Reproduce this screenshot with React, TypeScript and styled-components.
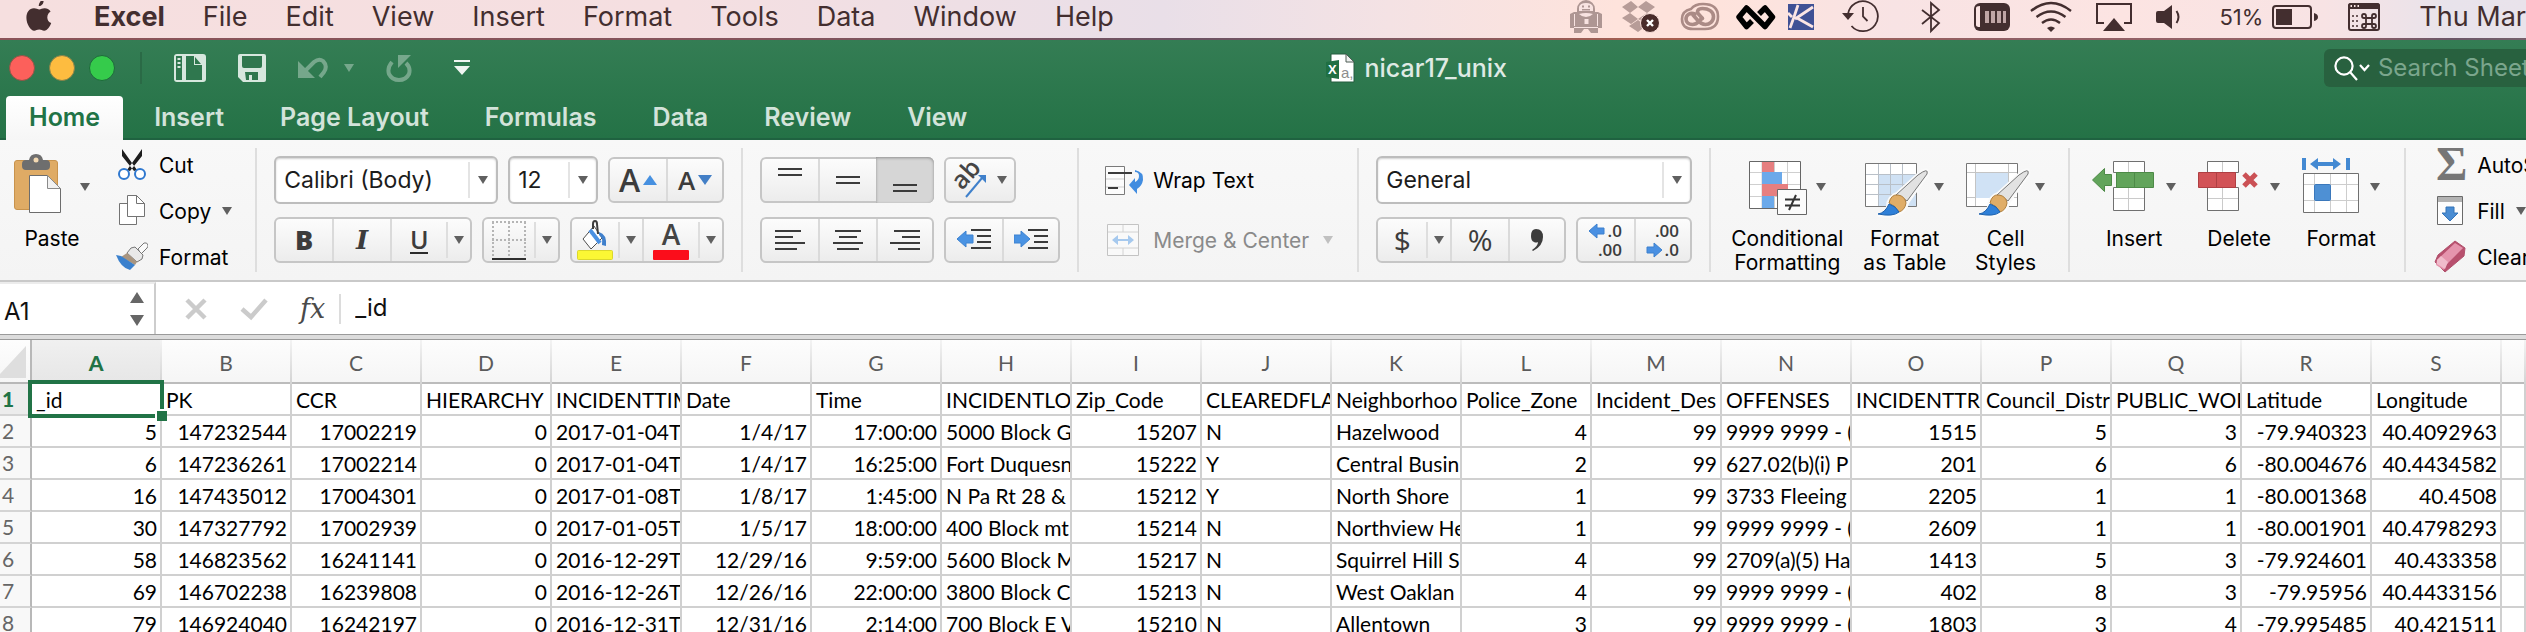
import React from 'react';
import styled, { createGlobalStyle, css } from 'styled-components';

const UI = `Inter, Roboto, "Liberation Sans", sans-serif`;
const SHEET = `Lato, "Open Sans", "Liberation Sans", sans-serif`;

const GlobalStyle = createGlobalStyle`
  *, *::before, *::after { box-sizing: border-box; }
  html, body { margin: 0; background: #fff; }
  body { font-family: ${UI}; overflow: hidden; }
  button, input, select { font: inherit; color: inherit; margin: 0; padding: 0; border: 0; background: none; outline: none; }
  svg { display: block; flex: none; }
`;

const Screen = styled.div`
  display: flex;
  flex-direction: column;
  height: 100vh;
  overflow: hidden;
`;

/* ---------- system menu bar ---------- */

const MenuBar = styled.header`
  flex: none;
  display: flex;
  align-items: center;
  justify-content: space-between;
  height: 38px;
  padding: 0 0 5px 26px;
  color: #432e2f;
  font-size: 27px;
  white-space: nowrap;
  background: linear-gradient(90deg, #f6dfdf 0%, #f5dfe1 27%, #e9dfe8 46%, #f4e2e4 55%, #fee3dc 64%, #fee3dc 68%, #f8e3e4 75%, #fce4e2 84%, #f8e3e4 92%, #e8e3eb 97%, #e9e3eb 100%);
`;

const MenuBarEdge = styled.div`
  flex: none;
  height: 2px;
  background: linear-gradient(90deg, #8b5358 0%, #84545c 30%, #6c5263 47%, #85595f 57%, #a8604f 66%, #8f6066 80%, #966266 92%, #6b5768 97%, #75606c 100%);
`;

const MenuNav = styled.nav`
  display: flex;
  align-items: center;
`;

const MenuItem = styled.button<{ $strong?: boolean }>`
  padding: 0 19px;
  line-height: 32px;
  font-weight: ${(p) => (p.$strong ? 700 : 400)};
`;

const AppleMark = styled.span`
  margin-right: 23px;
`;

const StatusArea = styled.div`
  display: flex;
  align-items: center;
  gap: 12px;
`;

const Battery = styled.div`
  display: flex;
  align-items: center;
  gap: 9px;
  padding-left: 9px;
  font-size: 22px;
`;

const Clock = styled.time`
  padding-left: 13px;
`;

/* ---------- title bar and tabs ---------- */

const WindowHead = styled.div`
  flex: none;
  background: linear-gradient(#347d54, #247246);
  border-bottom: 2px solid #1f6240;
`;

const TitleRow = styled.div`
  display: grid;
  grid-template-columns: minmax(0, 13fr) minmax(0, 10fr) minmax(0, 2fr);
  align-items: center;
  height: 56px;
  white-space: nowrap;
`;

const QuickTools = styled.div`
  display: flex;
  align-items: center;
  padding-left: 9px;
`;

const Lights = styled.div`
  display: flex;
  gap: 14px;
  padding: 3px 25px 3px 0;
  border-right: 2px solid #2a6a46;
  margin-right: 32px;
`;

const Light = styled.button<{ $fill: string; $edge: string }>`
  width: 26px;
  height: 26px;
  border: 1px solid ${(p) => p.$edge};
  border-radius: 50%;
  background: ${(p) => p.$fill};
`;

const ToolButtons = styled.div`
  display: flex;
  align-items: center;
  gap: 32px;
`;

const ToolButton = styled.button<{ $dim?: boolean }>`
  display: flex;
  align-items: center;
  gap: 16px;
  color: #d7e7de;
  opacity: ${(p) => (p.$dim ? 0.42 : 1)};

  &:last-child { margin-left: 10px; }
`;

const DocTitle = styled.h1`
  display: flex;
  align-items: center;
  gap: 10px;
  margin: 0;
  padding: 0 0 0 12px;
  color: #dfeae4;
  font-size: 25px;
  font-weight: 500;
  line-height: 30px;
`;

const SearchBox = styled.label`
  display: flex;
  align-items: center;
  gap: 8px;
  height: 38px;
  padding-left: 10px;
  border-radius: 6px 0 0 6px;
  background: #28613f;
  color: #fff;
  font-size: 24px;
  overflow: hidden;

  input { flex: 1 0 200px; line-height: 30px; }
  input::placeholder { color: #7ba68d; opacity: 1; }
`;

const Tabs = styled.nav`
  display: flex;
  gap: 6px;
  height: 42px;
  padding-left: 6px;
`;

const Tab = styled.button<{ $active?: boolean }>`
  padding: 0 25px;
  font-size: 25px;
  font-weight: 600;
  color: #d3e3da;
  ${(p) =>
    p.$active &&
    css`
      padding: 0 23px 2px;
      margin-bottom: -2px;
      border-radius: 4px 4px 0 0;
      color: #217346;
      background: linear-gradient(#fff, #f6f6f6);
    `}
`;

/* ---------- ribbon ---------- */

const Ribbon = styled.section`
  flex: none;
  display: flex;
  height: 142px;
  padding: 8px 0;
  border-bottom: 2px solid #c9c9c9;
  background: linear-gradient(#f8f8f8, #f4f4f4);
  color: #000;
  font-size: 21px;
  overflow: hidden;
`;

const Group = styled.div<{ $pad?: string; $gap?: number }>`
  flex: none;
  display: flex;
  gap: ${(p) => p.$gap ?? 0}px;
  padding: ${(p) => p.$pad ?? '0 17px'};
  border-right: 2px solid #dedede;
`;

const TwoRows = styled.div`
  display: grid;
  grid-template-rows: 48px 46px;
  gap: 13px;
  padding-top: 8px;
`;

const Row = styled.div`
  display: flex;
  align-items: center;
  gap: 10px;
`;

const ThreeRows = styled.div`
  display: grid;
  grid-auto-rows: 34px;
  gap: 12px;
`;

const Command = styled.button<{ $gap?: number }>`
  display: flex;
  align-items: center;
  gap: ${(p) => p.$gap ?? 11}px;
  white-space: nowrap;

  &:disabled { color: #8a8a8a; }
`;

const MutedCaret = styled.span`
  padding-left: 6px;
`;

const BigCommand = styled.button`
  display: flex;
  flex-direction: column;
  align-items: center;
  padding-top: 4px;
  line-height: 24px;
  white-space: pre-line;
`;

const BigIcon = styled.span`
  display: flex;
  align-items: center;
  height: 70px;
  margin-bottom: 5px;
`;

const ButtonSet = styled.div`
  display: flex;
  height: 46px;
  border: 2px solid #c6c6c6;
  border-radius: 6px;
  background: linear-gradient(#fcfcfc, #ececec);
`;

const SetButton = styled.button<{ $w: number; $line?: 'full' | 'short'; $on?: boolean }>`
  display: flex;
  align-items: center;
  justify-content: center;
  gap: 10px;
  width: ${(p) => p.$w}px;
  color: #3c3c3c;
  ${(p) => p.$line === 'full' && css`border-left: 2px solid #dadada;`}
  ${(p) =>
    p.$line === 'short' &&
    css`
      height: 36px;
      align-self: center;
      border-left: 2px solid #dedede;
    `}
  ${(p) =>
    p.$on &&
    css`
      margin: -2px -2px -2px 0;
      border-radius: 0 6px 6px 0;
      box-shadow: inset 0 1px 3px #8e8e8e;
      background: #d6d6d6;
    `}
`;

const Letter = styled.span<{ $size: number; $kind?: 'bold' | 'italic' | 'underline' | 'light' }>`
  font-family: "Open Sans", sans-serif;
  font-size: ${(p) => p.$size}px;
  font-weight: 600;
  line-height: 30px;
  ${(p) => p.$kind === 'light' && css`font-weight: 400;`}
  ${(p) => p.$kind === 'bold' && css`font-weight: 800;`}
  ${(p) => p.$kind === 'italic' && css`font-family: "DejaVu Serif", serif; font-style: italic; font-weight: 700;`}
  ${(p) => p.$kind === 'underline' && css`border-bottom: 2px solid #2c2c2c; line-height: 26px;`}
`;

const SizeMark = styled.span`
  display: flex;
  align-items: center;
  gap: 3px;
`;

const Combo = styled.label<{ $w: number }>`
  display: flex;
  align-items: center;
  width: ${(p) => p.$w}px;
  height: 48px;
  border: 2px solid #bdbdbd;
  border-radius: 6px;
  background: #fff;
  box-shadow: inset 0 1px 2px #d0d0d0;
  color: #1c1c1c;
  font-size: 23px;

  select {
    flex: 1;
    min-width: 0;
    padding-left: 8px;
    appearance: none;
  }
`;

const ComboArrow = styled.span`
  display: flex;
  align-items: center;
  justify-content: center;
  width: 28px;
  height: 36px;
  border-left: 2px solid #e4e4e4;
`;

/* ---------- formula bar ---------- */

const FormulaBar = styled.div`
  flex: none;
  display: flex;
  align-items: stretch;
  height: 52px;
  background: #fff;
  color: #111;
  font-size: 24px;
`;

const NameBox = styled.div`
  display: flex;
  align-items: center;
  width: 156px;
  padding: 0 10px 0 4px;
  border-top: 2px solid #ececec;
  border-right: 2px solid #cdcdcd;

  input { flex: 1; min-width: 0; padding-top: 4px; }
`;

const FormulaTools = styled.div`
  display: flex;
  align-items: center;
  gap: 32px;
  margin: 12px 0 10px;
  padding: 0 14px 0 28px;
  border-right: 2px solid #dcdcdc;
`;

const FxButton = styled.button`
  color: #4a4a4a;
  font-family: "DejaVu Serif", serif;
  font-size: 27px;
  font-style: italic;
  line-height: 30px;
`;

const FormulaInput = styled.input`
  flex: 1;
  min-width: 0;
  && { padding: 0 0 2px 14px; }
`;

const SplitLine = styled.div`
  flex: none;
  height: 6px;
  border: solid #9a9a9a;
  border-width: 1px 0;
  background: #dcdcdc;
`;

/* ---------- sheet ---------- */

const SheetArea = styled.main`
  flex: 1;
  min-height: 0;
  overflow: hidden;
`;

const Sheet = styled.table`
  width: 100%;
  min-width: 2502px;
  table-layout: fixed;
  border-collapse: separate;
  border-spacing: 0;
  font-family: ${SHEET};
  font-size: 21px;
  line-height: 30px;
  color: #000;

  col.rows { width: 32px; }
  col.data { width: 130px; }
`;

const Corner = styled.td`
  height: 44px;
  padding: 0 4px 4px 0;
  vertical-align: bottom;
  border-right: 2px solid #b8b8b8;
  border-bottom: 2px solid #b8b8b8;
  background: linear-gradient(#fdfdfd, #f6f6f6);

  svg { margin-left: auto; }
`;

const ColHead = styled.th<{ $active?: boolean }>`
  height: 44px;
  padding: 1px 0 0;
  border-right: 2px solid;
  border-image: linear-gradient(#f4f4f4, #d2d2d2) 1;
  color: ${(p) => (p.$active ? '#217346' : '#5b5b5b')};
  font-weight: ${(p) => (p.$active ? 900 : 400)};
  background: ${(p) => (p.$active ? 'linear-gradient(#f0f0f0, #e6e6e6)' : 'linear-gradient(#fdfdfd, #f5f5f5)')};
  box-shadow: inset 0 -2px #bcbcbc;
`;

const RowHead = styled.th<{ $active?: boolean }>`
  height: 32px;
  padding: 0 0 0 2px;
  border-right: 2px solid #b8b8b8;
  border-bottom: 2px solid #d4d4d4;
  text-align: left;
  color: ${(p) => (p.$active ? '#217346' : '#666')};
  font-weight: ${(p) => (p.$active ? 900 : 400)};
  background: ${(p) => (p.$active ? '#ececec' : '#f8f8f8')};
`;

const Cell = styled.td<{ $num?: boolean; $selected?: boolean }>`
  height: 32px;
  padding: 1px 3px 0 4px;
  border-right: 2px solid #d0d0d0;
  border-bottom: 2px solid #d0d0d0;
  line-height: 29px;
  text-align: ${(p) => (p.$num ? 'right' : 'left')};
  white-space: nowrap;
  overflow: ${(p) => (p.$selected ? 'visible' : 'hidden')};
  position: ${(p) => (p.$selected ? 'relative' : 'static')};
  background: #fff;
`;

const Selection = styled.span`
  position: absolute;
  inset: -4px;
  border: 4px solid #217346;

  &::after {
    content: '';
    position: absolute;
    right: -7px;
    bottom: -7px;
    width: 12px;
    height: 12px;
    border: solid #fff;
    border-width: 2px 0 0 2px;
    background: #217346;
  }
`;

/* ---------- drawings ---------- */

const Caret = ({ color = '#606060' }: { color?: string }) => (
  <svg width="10" height="8" viewBox="0 0 10 8"><path d="M0 0h10L5 8z" fill={color} /></svg>
);

const AppleIcon = () => (
  <svg width="26" height="32" viewBox="0 0 26 32" fill="#432e2f">
    <path d="M17.6 0c0 2-1 3.200-2.200 4.200-.9.700-1.800 1-2.700.9 0-2 .9-3.600 2-5.100z" />
    <path d="M21.300 16.500c0-3 1.600-4.700 3.300-5.900-1.500-2.300-3.700-3.200-5.700-3.300-2.400-.2-4 1.200-5.600 1.200-1.500 0-3.300-1.300-5.500-1.200C3.400 7.400.4 11.200.4 16.800c0 6.200 4.200 13 7.800 13 1.800 0 2.900-1.200 5-1.200 2.200 0 3 1.200 5 1.200 3.200 0 6-4.900 7-7.700-2.400-1-3.900-3-3.900-5.600z" />
  </svg>
);

const RobotIcon = () => (
  <svg width="40" height="34" viewBox="0 0 40 34" fill="#ae9693">
    <path d="M11 12V9a9 9 0 0 1 18 0v3h3l4 2v14h-4v5h-7l-3-4h-4l-3 4H8v-5H4V14l4-2z" />
    <path d="M13 11V7q1-4 7-4t7 4v4z" fill="#f8e3e1" />
    <path d="M16 5.500h2v2h-2zm6 0h2v2h-2zM16 9h8v1.500h-8z" fill="#ae9693" />
    <path d="M13 14q7-2 14 0-3 3-7 3t-7-3zM18.500 19h4v5h-4zM8 27h24v1H8zM8 14h1v12H8zm23 0h1v12h-1z" fill="#f8e3e1" />
  </svg>
);

const DropboxIcon = () => (
  <svg width="48" height="34" viewBox="0 0 48 34">
    <path d="M4 7l9-6 7 6-8 6zM20 7l8-6 9 6-8 6zM4 18l8-5 8 6-7 5zM20 19l9-6 8 5-8 6zM11 26l9-6 8 6-8 6z" fill="#b79c98" />
    <circle cx="32" cy="23" r="9.500" fill="#4a2c2a" stroke="#fbe2dd" />
    <path d="M29 20l6 6m0-6l-6 6" stroke="#fff" strokeWidth="2.400" />
  </svg>
);

const CloudIcon = () => (
  <svg width="44" height="32" viewBox="0 0 44 32" fill="none" stroke="#ab8b86" strokeLinecap="round">
    <path d="M15 28q-11 0-11-10 0-8 9-10Q17 3 25 3q15 0 15 12.500 0 12.500-13 12.500z" strokeWidth="2.600" />
    <path d="M17 13c-5-2-9 1-9 5 0 3.500 3 5.500 6.500 5.500 3 0 4.500-1 6.500-3l3-3.500" strokeWidth="3.600" />
    <path d="M24.500 17.500l-4-4.500c-2-2.500-1-5.500 4-5.500 6 0 11 3 11 8 0 5-4 8-8 8-4 0-6-2-8.500-5L15 14" strokeWidth="3.600" />
  </svg>
);

const LoopIcon = () => (
  <svg width="42" height="30" viewBox="0 0 42 30" fill="none" stroke="#000" strokeWidth="5.500" strokeLinejoin="round">
    <path d="M18 19l-5.500 5.500L5 15l7.500-9L31 24.500l7.500-9.500L31 6l-6 6" />
  </svg>
);

const KIcon = () => (
  <svg width="26" height="26" viewBox="0 0 26 26">
    <path d="M0 0h26v26H0z" fill="#3f5195" />
    <path d="M10 1L6 13 2 24M0 9l4 4M25 3L7 15M9 14l16 9" stroke="#fbe5e4" strokeWidth="2.800" fill="none" />
  </svg>
);

const TimeMachineIcon = () => (
  <svg width="64" height="34" viewBox="0 0 64 34" fill="none" stroke="#432e2f" strokeWidth="1.800">
    <path d="M22 14A15 15 0 1 1 25.500 26" />
    <path d="M37 7v9.500l4.500 4.500" />
    <path d="M16 13h12l-6 7z" fill="#432e2f" stroke="none" />
  </svg>
);

const BluetoothIcon = () => (
  <svg width="52" height="34" viewBox="0 0 52 34" fill="none" stroke="#432e2f" strokeWidth="1.800">
    <path d="M20 10l17 13-8 8V3l8 7-17 14" />
  </svg>
);

const MemoryIcon = () => (
  <svg width="50" height="32" viewBox="0 0 50 32">
    <rect x="8" y="2" width="36" height="28" rx="6" fill="#432e2f" />
    <path d="M10 7q0-2 4-2v21q-4 0-4-2z" fill="#fbe5e4" />
    <path d="M19 10h4v12h-4zm6 0h4v12h-4zm6 0h4v12h-4zm6 0h3v12h-3z" fill="#bfa5a5" />
  </svg>
);

const WifiIcon = () => (
  <svg width="46" height="32" viewBox="0 0 46 32" fill="none" stroke="#432e2f" strokeWidth="2.400">
    <path d="M3 10q20-16 40 0M8.500 16q14.500-11 29 0M14 22q9-7 18 0" />
    <path d="M19 27q4-3 8 0l-4 4z" fill="#432e2f" stroke="none" />
  </svg>
);

const AirplayIcon = () => (
  <svg width="52" height="32" viewBox="0 0 52 32">
    <path d="M18 22h-7V3h34v19h-7" fill="none" stroke="#432e2f" strokeWidth="2" />
    <path d="M28 17l11 13H17z" fill="#432e2f" />
  </svg>
);

const VolumeIcon = () => (
  <svg width="48" height="32" viewBox="0 0 48 32">
    <path d="M6 12q0-2 2-2h6l8-6v24l-8-6H8q-2 0-2-2z" fill="#432e2f" />
    <path d="M26.500 10q4 6 0 12" fill="none" stroke="#432e2f" strokeWidth="2" />
  </svg>
);

const BatteryIcon = () => (
  <svg width="52" height="32" viewBox="0 0 52 32">
    <rect x="1" y="5" width="38" height="22" rx="3" fill="none" stroke="#432e2f" strokeWidth="2" />
    <path d="M4 8h16v16H4zM42 12q4 1 4 4t-4 4z" fill="#432e2f" />
  </svg>
);

const CalendarIcon = () => (
  <svg width="58" height="32" viewBox="0 0 58 32" fill="none" stroke="#432e2f">
    <rect x="13" y="3" width="30" height="26" rx="2" strokeWidth="2" />
    <path d="M12 5q0-3 3-3h26q3 0 3 3v3H12z" fill="#432e2f" stroke="none" />
    <path d="M14.500 5h1.500m2 0h1.500m2 0h1.500" stroke="#fbe5e4" strokeWidth="2" />
    <path d="M17 14v12m4-12v12" strokeDasharray="2 3" strokeWidth="1.500" />
    <path d="M30 17h6v6h-6zM30 17h-2a2 2 0 1 1 2-2zM36 17h2a2 2 0 1 0-2-2zM30 23h-2a2 2 0 1 0 2 2zM36 23h2a2 2 0 1 1-2 2z" strokeWidth="1.800" />
  </svg>
);

const SidebarIcon = () => (
  <svg width="32" height="28" viewBox="0 0 32 28">
    <rect width="32" height="28" rx="3" fill="currentColor" />
    <path d="M2 2h6v24H2zM12 2h8v9h8v15H12z" fill="#2f774e" />
    <path d="M3.500 4h3v2h-3zm0 4h3v2h-3zm0 4h3v2h-3z" fill="currentColor" />
    <path d="M21 3l6 7h-6z" fill="#2f774e" />
  </svg>
);

const SaveIcon = () => (
  <svg width="28" height="28" viewBox="0 0 28 28">
    <path d="M2 0h24q2 0 2 2v24q0 2-2 2H5l-5-5V2q0-2 2-2z" fill="currentColor" />
    <path d="M4 2h20v10q0 2-2 2H6q-2 0-2-2zM7 18h13v8h-6v-5h-3v5H8z" fill="#2f774e" />
  </svg>
);

const UndoIcon = () => (
  <svg width="30" height="22" viewBox="0 0 30 22">
    <path d="M0 4v17h17z" fill="currentColor" />
    <path d="M7 14L16 5q5-4 9-1 5 5 1 11l-4 5" fill="none" stroke="currentColor" strokeWidth="4" />
  </svg>
);

const RedoIcon = () => (
  <svg width="26" height="27" viewBox="0 0 26 27">
    <path d="M6 7q-5 6-3 12 3 6 10 6t10-6q2-6-3-11" fill="none" stroke="currentColor" strokeWidth="4" />
    <path d="M12 0h13L12 13z" fill="currentColor" />
  </svg>
);

const CustomizeIcon = () => (
  <svg width="16" height="16" viewBox="0 0 16 16" fill="#f0f6f2"><path d="M0 0h16v2H0zM0 6h16l-8 9z" /></svg>
);

const BookIcon = () => (
  <svg width="29" height="30" viewBox="0 0 29 30">
    <path d="M5 1h15l8 8v20H5z" fill="#fff" stroke="#245c3e" />
    <path d="M20 1v8h8z" fill="#eef0ef" stroke="#4e5d55" strokeLinejoin="round" />
    <path d="M0 9l13-2v19L0 24z" fill="#1f6f43" />
    <text x="2" y="21" fontSize="13" fontWeight="700" fontFamily="Liberation Sans" fill="#fff">X</text>
    <text x="15" y="25" fontSize="15" fontFamily="Liberation Sans" fill="#8d8d8d">a,</text>
  </svg>
);

const SearchIcon = () => (
  <svg width="36" height="28" viewBox="0 0 36 28" fill="none" stroke="#fff" strokeWidth="2.200">
    <circle cx="10" cy="12" r="8.600" />
    <path d="M16 18l7 8M26 11l4.500 5 4.500-5" />
  </svg>
);

const PasteIcon = () => (
  <svg width="66" height="70" viewBox="0 0 66 70">
    <rect x=".5" y="8.500" width="43" height="49" rx="2.500" fill="#dfab65" stroke="#c8934d" />
    <path d="M8 12q0-4 4-4h3q1-6 7-6t7 6h3q4 0 4 4v2q0 4-4 4H12q-4 0-4-4z" fill="#6e6e6e" />
    <circle cx="22" cy="8" r="2.500" fill="#f3d9b2" />
    <path d="M15.500 23.500h18l13 13v24h-31z" fill="#fff" stroke="#6d6d6d" />
    <path d="M33.500 23.500v13h13z" fill="#f1f1f1" stroke="#8a8a8a" strokeLinejoin="round" />
  </svg>
);

const CutIcon = () => (
  <svg width="32" height="34" viewBox="0 0 32 34">
    <path d="M6 1l15 21-3 1L6 8zM26 1L11 22l3 1L26 8z" fill="#1d1d1d" />
    <g fill="#fff" stroke="#2f78cf" strokeWidth="2"><circle cx="8" cy="26" r="5" /><circle cx="24" cy="26" r="5" /></g>
  </svg>
);

const CopyIcon = () => (
  <svg width="32" height="34" viewBox="0 0 32 34" fill="#fff" stroke="#737373">
    <path d="M3.500 9.500h17v21h-17z" />
    <path d="M11.500 1.500h9l8 8v13h-17z" />
    <path d="M20.500 1.500v8h8z" strokeLinejoin="round" />
  </svg>
);

const PainterIcon = () => (
  <svg width="32" height="34" viewBox="0 0 32 34">
    <path d="M22 9l6-6q3-1 4 2 0 2-1 3l-6 6z" fill="#fafafa" stroke="#777" />
    <path d="M15 8l4-1 8 8-1 4-5 3-10-9z" fill="#e9e9e9" stroke="#777" />
    <path d="M11 13l10 9-2 3L5 17z" fill="#a89580" />
    <path d="M5 16l14 9-5 5Q5 28 0 15z" fill="#3a80cd" />
  </svg>
);

const SigmaIcon = () => (
  <svg width="32" height="34" viewBox="0 0 32 34">
    <text x="2" y="32" fontSize="48" fontWeight="700" fontFamily="Liberation Serif" fill="#767676">Σ</text>
  </svg>
);

const FillIcon = () => (
  <svg width="32" height="34" viewBox="0 0 32 34">
    <path d="M3.500 2.500h25v28h-25z" fill="#fdfdfd" stroke="#6a6a6a" />
    <path d="M4 3h24v5H4z" fill="#b3b3b3" />
    <path d="M12 13h8v6h4l-8 8-8-8h4z" fill="#4a8dd3" stroke="#3574b8" />
  </svg>
);

const EraserIcon = () => (
  <svg width="32" height="34" viewBox="0 0 32 34" strokeLinejoin="round">
    <path d="M1 22L4 15 21 1l10 7-1 8-19 16z" fill="#b8506e" stroke="#b0506c" />
    <path d="M3 20L21 3l8 5-17 17-2 5-8-5z" fill="#e594ad" />
    <path d="M3 20l4-4 7 6-3 7-8-5z" fill="#f0bccb" />
  </svg>
);

const FontStep = ({ up }: { up?: boolean }) => (
  <svg width="14" height="10" viewBox="0 0 14 10"><path d={up ? 'M7 0l7 10H0z' : 'M0 0h14L7 10z'} fill={up ? '#4690e0' : '#437fc6'} /></svg>
);

const FontSize = ({ up }: { up?: boolean }) => (
  <SizeMark><Letter $size={up ? 32 : 26}>A</Letter><FontStep up={up} /></SizeMark>
);

const BordersIcon = () => (
  <svg width="36" height="42" viewBox="0 0 36 42" fill="none">
    <path d="M1 3h34M1 21h34M2 3v34M18 3v34M34 3v34" stroke="#b5b5b5" strokeWidth="2" strokeDasharray="2 2" />
    <path d="M1 40h34" stroke="#2d2d2d" strokeWidth="2" />
  </svg>
);

const BucketIcon = () => (
  <svg width="36" height="42" viewBox="0 0 36 42">
    <path d="M6 20l11-13 8 12-11 11z" fill="#fff" stroke="#4e4e4e" />
    <path d="M13 11l10 13" stroke="#4a90e2" strokeWidth="4" />
    <path d="M16 10V5q0-3 2-3t2 3l1 10" fill="none" stroke="#3e3e3e" strokeWidth="2" />
    <path d="M22 13q8 2 7 14l-4-1q1-8-3-10z" fill="#4080cc" />
    <rect x=".5" y="31.500" width="35" height="9" rx="1" fill="#fbf734" stroke="#dbd72d" />
  </svg>
);

const FontColorIcon = () => (
  <svg width="36" height="42" viewBox="0 0 36 42">
    <text x="18" y="26" textAnchor="middle" fontSize="28" fontWeight="600" fontFamily="Open Sans" fill="#444">A</text>
    <rect y="31" width="36" height="10" rx="1" fill="#fb0d1b" />
  </svg>
);

const VerticalIcon = ({ y }: { y: number }) => (
  <svg width="24" height="30" viewBox="0 0 24 30"><path d={`M0 ${y}h24M0 ${y + 6}h24`} stroke="#3b3b3b" strokeWidth="2" /></svg>
);

const AlignIcon = ({ side }: { side: 'left' | 'center' | 'right' }) => {
  const widths = [26, 18, 30, 22];
  return (
    <svg width="30" height="22" viewBox="0 0 30 22">
      {widths.map((w, i) => (
        <rect key={w} x={side === 'left' ? 0 : side === 'center' ? (30 - w) / 2 : 30 - w} y={1 + i * 6} width={w} height="2" fill="#3b3b3b" />
      ))}
    </svg>
  );
};

const OrientationIcon = () => (
  <svg width="34" height="40" viewBox="0 0 34 40">
    <text transform="translate(9 31) rotate(-48)" fontSize="25" fontWeight="600" fontFamily="Open Sans" fill="#454545">ab</text>
    <path d="M13 37l16-19" stroke="#3f80cb" strokeWidth="2" />
    <path d="M25 15h8v8z" fill="#3f80cb" />
  </svg>
);

const IndentIcon = ({ out }: { out?: boolean }) => (
  <svg width="34" height="24" viewBox="0 0 34 24">
    <path d="M14 2h20M20 8h14M20 14h14M14 20h20" stroke="#3b3b3b" strokeWidth="2" />
    <path d={out ? 'M0 11L9 3v4h7v8H9v4z' : 'M16 11L7 3v4H0v8h7v4z'} fill="#4a93e3" stroke="#3c82d0" />
  </svg>
);

const WrapIcon = () => (
  <svg width="40" height="32" viewBox="0 0 40 32">
    <path d="M.5 2.500h19v28H.5z" fill="#fcfcfc" stroke="#7a7a7a" />
    <path d="M1 15h18M1 23h18" stroke="#cfcfcf" />
    <path d="M3 9h24M3 24h10" stroke="#3c3c3c" strokeWidth="2" />
    <path d="M30 6q9 2 8 10-1 6-6 9v5l-8-9 6-7v4q4-2 4-6 0-4-4-4z" fill="#428de0" />
  </svg>
);

const MergeIcon = () => (
  <svg width="40" height="34" viewBox="0 0 40 34">
    <path d="M2.500 1.500h31v31h-31z" fill="#f9f9f9" stroke="#c3c3c3" />
    <path d="M3 9h30M3 25h30M18 2v7M18 25v7" stroke="#d2d2d2" />
    <path d="M7 17l6-5v4h10v-4l6 5-6 5v-4H13v4z" fill="#a6c9ee" />
  </svg>
);

const CommaIcon = () => (
  <svg width="14" height="24" viewBox="0 0 14 24">
    <path d="M6 1q7 0 7 8 0 9-10 14l-1-1q6-4 6-8-2 1-4 0-3-1-3-6 0-7 5-7z" fill="#3c3c3c" />
  </svg>
);

const DecimalIcon = ({ more }: { more?: boolean }) => (
  <svg width="38" height="36" viewBox="0 0 38 36" fontFamily="Open Sans" fontSize="17" fontWeight="600" fill="#3c3c3c">
    <text x="35" y="15" textAnchor="end">{more ? '.0' : '.00'}</text>
    <text x="35" y="34" textAnchor="end">{more ? '.00' : '.0'}</text>
    <path d={more ? 'M2 9l8-7v4h7v6h-7v4z' : 'M18 28l-8-7v4H3v6h7v4z'} fill="#4a90e2" stroke="#3c80ce" />
  </svg>
);

const ConditionalIcon = () => (
  <svg width="67" height="70" viewBox="0 0 67 70">
    <path d="M.5 9.500h51v47H.5z" fill="#fff" />
    <path d="M13 9v47M25.500 9v47M38.500 9v47M1 20.500h50M1 32.500h50M1 44.500h50" stroke="#cfcfcf" />
    <path d="M13 10h12v10H13zM13 32h26v12H13z" fill="#e67f80" />
    <path d="M13 20h20v12H13zM13 44h12v12H13z" fill="#6ba9ea" />
    <path d="M.5 9.500h51v47H.5z" fill="none" stroke="#666" />
    <path d="M28.500 37.500h29v25h-29z" fill="#fbfbfb" stroke="#666" />
    <path d="M36 47.500h15M36 53.500h15M47 43l-7 15" stroke="#333" strokeWidth="2" />
  </svg>
);

const Brush = () => (
  <g>
    <path d="M13 63q7-1 10-8 0-10 9-13L54 22q10-8 8 1L46 45q-4 5-5 9-6 12-28 9z" fill="none" stroke="#fafafa" strokeWidth="4" />
    <path d="M31 43L53 23q11-8 9-1L42 49q-6-5-11-6z" fill="#e2e2e2" stroke="#777" />
    <path d="M24 51q2-9 9-8 7 1 8 8-1 7-7 9-4-7-10-9z" fill="#e0ad67" stroke="#b07f3c" />
    <path d="M13 62q7-1 11-10 7 2 10 8-6 5-21 2z" fill="#2f80d8" stroke="#1f62ad" />
  </g>
);

const TableStyleIcon = () => (
  <svg width="69" height="70" viewBox="0 0 69 70">
    <path d="M.5 11.500h51v43H.5z" fill="#fff" />
    <path d="M13 22h38v32H13z" fill="#cfe1f4" />
    <path d="M13.500 12v42M25.500 12v42M37.500 12v42M1 22.500h50M1 32.500h50M1 42.500h50" stroke="#b9c0c8" />
    <path d="M.5 11.500h51v43H.5z" fill="none" stroke="#777" />
    <Brush />
  </svg>
);

const CellStyleIcon = () => (
  <svg width="69" height="70" viewBox="0 0 69 70">
    <path d="M.5 11.500h51v43H.5z" fill="#fff" />
    <path d="M9.500 12v42M42.500 12v42M1 20.500h50M1 45.500h50" stroke="#c4c4c4" />
    <path d="M10 21h32v25H10z" fill="#d0e2f5" />
    <path d="M.5 11.500h51v43H.5z" fill="none" stroke="#777" />
    <Brush />
  </svg>
);

const InsertIcon = () => (
  <svg width="74" height="70" viewBox="0 0 74 70">
    <path d="M21.500 9.500h31v11h-31zM21.500 35.500h31v23h-31z" fill="#fff" stroke="#707070" />
    <path d="M36.500 10v10M36.500 36v22M22 46.500h30" stroke="#cacaca" />
    <path d="M24.500 20.500h37v15h-37zM.5 28L12.500 16.500v6h7v11h-7v6z" fill="#62a45b" stroke="#4d8a47" strokeLinejoin="round" />
    <path d="M42.500 21v14" stroke="#4d8a47" />
  </svg>
);

const DeleteIcon = () => (
  <svg width="72" height="70" viewBox="0 0 72 70">
    <path d="M9.500 9.500h31v11h-31zM9.500 35.500h31v23h-31z" fill="#fff" stroke="#707070" />
    <path d="M24.500 10v10M24.500 36v22M10 46.500h30" stroke="#cacaca" />
    <path d="M.5 20.500h37v15H.5z" fill="#d25357" stroke="#b03f43" strokeLinejoin="round" />
    <path d="M18.500 21v14" stroke="#b03f43" />
    <path d="M46 22l12 12m0-12L46 34" stroke="#cb5155" strokeWidth="5" />
  </svg>
);

const FormatIcon = () => (
  <svg width="68" height="70" viewBox="0 0 68 70">
    <path d="M1.500 21.500h55v39h-55z" fill="#fff" />
    <path d="M12.500 22v38M28.500 22v38M44.500 22v38M2 32.500h54M2 48.500h54" stroke="#cdcdcd" />
    <path d="M1.500 21.500h55v39h-55z" fill="none" stroke="#707070" />
    <path d="M0 6h4v12H0zM44 6h4v12h-4zM8 12l8-6v4h15V6l8 6-8 6v-4H16v4z" fill="#4389d2" />
    <rect x="12.500" y="32.500" width="16" height="16" rx="1" fill="#4e90d4" stroke="#3b78bb" />
  </svg>
);

const SpinnerIcon = () => (
  <svg width="14" height="34" viewBox="0 0 14 34" fill="#666"><path d="M7 0l7 11H0zM0 23h14L7 34z" /></svg>
);

const CancelIcon = () => (
  <svg width="24" height="24" viewBox="0 0 24 24"><path d="M3 3l18 18M21 3L3 21" stroke="#cbcbcb" strokeWidth="4.500" /></svg>
);

const AcceptIcon = () => (
  <svg width="28" height="24" viewBox="0 0 28 24"><path d="M2 12l9 8L26 3" fill="none" stroke="#cbcbcb" strokeWidth="4.500" /></svg>
);

const CornerIcon = () => (
  <svg width="26" height="32" viewBox="0 0 26 32"><path d="M26 0v32H0v-4z" fill="#dedede" /></svg>
);

/* ---------- data ---------- */

const menus = ['File', 'Edit', 'View', 'Insert', 'Format', 'Tools', 'Data', 'Window', 'Help'];
const tabs = ['Home', 'Insert', 'Page Layout', 'Formulas', 'Data', 'Review', 'View'];
const letters = 'ABCDEFGHIJKLMNOPQRS'.split('');
const textColumns = new Set([4, 7, 9, 10, 13]);

const rows: string[][] = [
  ['_id', 'PK', 'CCR', 'HIERARCHY', 'INCIDENTTIM', 'Date', 'Time', 'INCIDENTLOC', 'Zip_Code', 'CLEAREDFLA', 'Neighborhoo', 'Police_Zone', 'Incident_Des', 'OFFENSES', 'INCIDENTTRA', 'Council_Distr', 'PUBLIC_WOR', 'Latitude', 'Longitude'],
  ['5', '147232544', '17002219', '0', '2017-01-04T', '1/4/17', '17:00:00', '5000 Block G', '15207', 'N', 'Hazelwood', '4', '99', '9999 9999 - (', '1515', '5', '3', '-79.940323', '40.4092963'],
  ['6', '147236261', '17002214', '0', '2017-01-04T', '1/4/17', '16:25:00', 'Fort Duquesn', '15222', 'Y', 'Central Busin', '2', '99', '627.02(b)(i) P', '201', '6', '6', '-80.004676', '40.4434582'],
  ['16', '147435012', '17004301', '0', '2017-01-08T', '1/8/17', '1:45:00', 'N Pa Rt 28 &', '15212', 'Y', 'North Shore', '1', '99', '3733 Fleeing', '2205', '1', '1', '-80.001368', '40.4508'],
  ['30', '147327792', '17002939', '0', '2017-01-05T', '1/5/17', '18:00:00', '400 Block mt', '15214', 'N', 'Northview He', '1', '99', '9999 9999 - (', '2609', '1', '1', '-80.001901', '40.4798293'],
  ['58', '146823562', '16241141', '0', '2016-12-29T', '12/29/16', '9:59:00', '5600 Block M', '15217', 'N', 'Squirrel Hill S', '4', '99', '2709(a)(5) Ha', '1413', '5', '3', '-79.924601', '40.433358'],
  ['69', '146702238', '16239808', '0', '2016-12-26T', '12/26/16', '22:00:00', '3800 Block C', '15213', 'N', 'West Oaklan', '4', '99', '9999 9999 - (', '402', '8', '3', '-79.95956', '40.4433156'],
  ['79', '146924040', '16242197', '0', '2016-12-31T', '12/31/16', '2:14:00', '700 Block E V', '15210', 'N', 'Allentown', '3', '99', '9999 9999 - (', '1803', '3', '4', '-79.995485', '40.421511'],
];

const ComboBox = ({ label, value, width }: { label: string; value: string; width: number }) => (
  <Combo $w={width}>
    <select aria-label={label} defaultValue={value}><option>{value}</option></select>
    <ComboArrow><Caret /></ComboArrow>
  </Combo>
);

const Drop = ({ label, width = 24 }: { label: string; width?: number }) => (
  <SetButton $w={width} $line="short" aria-label={label}><Caret /></SetButton>
);

const Big = ({ icon, label }: { icon: React.ReactNode; label: string }) => (
  <BigCommand>
    <BigIcon>{icon}<Caret /></BigIcon>
    {label}
  </BigCommand>
);

export default function App() {
  return (
    <Screen>
      <GlobalStyle />
      <MenuBar>
        <MenuNav aria-label="Menu bar">
          <AppleMark><AppleIcon /></AppleMark>
          <MenuItem $strong>Excel</MenuItem>
          {menus.map((m) => <MenuItem key={m}>{m}</MenuItem>)}
        </MenuNav>
        <StatusArea>
          <RobotIcon /><DropboxIcon /><CloudIcon /><LoopIcon /><KIcon /><TimeMachineIcon /><BluetoothIcon />
          <MemoryIcon /><WifiIcon /><AirplayIcon /><VolumeIcon />
          <Battery>51%<BatteryIcon /></Battery>
          <CalendarIcon />
          <Clock>Thu Mar</Clock>
        </StatusArea>
      </MenuBar>
      <MenuBarEdge />

      <WindowHead>
        <TitleRow>
          <QuickTools>
            <Lights>
              <Light aria-label="Close" $fill="#fc605b" $edge="#8f5546" />
              <Light aria-label="Minimize" $fill="#fdbc40" $edge="#86814a" />
              <Light aria-label="Zoom" $fill="#35cb4b" $edge="#1e6a3b" />
            </Lights>
            <ToolButtons>
              <ToolButton aria-label="Gallery"><SidebarIcon /></ToolButton>
              <ToolButton aria-label="Save"><SaveIcon /></ToolButton>
              <ToolButton aria-label="Undo" $dim><UndoIcon /><Caret color="#d7e7de" /></ToolButton>
              <ToolButton aria-label="Repeat" $dim><RedoIcon /></ToolButton>
              <ToolButton aria-label="Customize toolbar"><CustomizeIcon /></ToolButton>
            </ToolButtons>
          </QuickTools>
          <DocTitle><BookIcon />nicar17_unix</DocTitle>
          <SearchBox><SearchIcon /><input aria-label="Search Sheet" placeholder="Search Sheet" /></SearchBox>
        </TitleRow>
        <Tabs>
          {tabs.map((t, i) => <Tab key={t} $active={i === 0}>{t}</Tab>)}
        </Tabs>
      </WindowHead>

      <Ribbon>
        <Group $pad="0 23px 0 14px" $gap={26}>
          <Big icon={<PasteIcon />} label="Paste" />
          <ThreeRows>
            <Command><CutIcon />Cut</Command>
            <Command><CopyIcon />Copy<Caret /></Command>
            <Command><PainterIcon />Format</Command>
          </ThreeRows>
        </Group>

        <Group>
          <TwoRows>
            <Row>
              <ComboBox label="Font" value="Calibri (Body)" width={224} />
              <ComboBox label="Font size" value="12" width={90} />
              <ButtonSet>
                <SetButton $w={56} aria-label="Increase font size"><FontSize up /></SetButton>
                <SetButton $w={56} $line="full" aria-label="Decrease font size"><FontSize /></SetButton>
              </ButtonSet>
            </Row>
            <Row>
              <ButtonSet>
                <SetButton $w={56}><Letter $size={27} $kind="bold">B</Letter></SetButton>
                <SetButton $w={58} $line="full"><Letter $size={26} $kind="italic">I</Letter></SetButton>
                <SetButton $w={56} $line="full"><Letter $size={25} $kind="underline">U</Letter></SetButton>
                <Drop label="Underline styles" />
              </ButtonSet>
              <ButtonSet>
                <SetButton $w={50} aria-label="Borders"><BordersIcon /></SetButton>
                <Drop label="Border styles" />
              </ButtonSet>
              <ButtonSet>
                <SetButton $w={46} aria-label="Fill color"><BucketIcon /></SetButton>
                <Drop label="Fill colors" />
                <SetButton $w={56} $line="full" aria-label="Font color"><FontColorIcon /></SetButton>
                <Drop label="Font colors" />
              </ButtonSet>
            </Row>
          </TwoRows>
        </Group>

        <Group>
          <TwoRows>
            <Row>
              <ButtonSet>
                <SetButton $w={56} aria-label="Top align"><VerticalIcon y={4} /></SetButton>
                <SetButton $w={58} $line="full" aria-label="Middle align"><VerticalIcon y={12} /></SetButton>
                <SetButton $w={58} $on aria-label="Bottom align"><VerticalIcon y={20} /></SetButton>
              </ButtonSet>
              <ButtonSet>
                <SetButton $w={68} aria-label="Orientation"><OrientationIcon /><Caret /></SetButton>
              </ButtonSet>
            </Row>
            <Row>
              <ButtonSet>
                <SetButton $w={56} aria-label="Align left"><AlignIcon side="left" /></SetButton>
                <SetButton $w={58} $line="full" aria-label="Align center"><AlignIcon side="center" /></SetButton>
                <SetButton $w={56} $line="full" aria-label="Align right"><AlignIcon side="right" /></SetButton>
              </ButtonSet>
              <ButtonSet>
                <SetButton $w={56} aria-label="Decrease indent"><IndentIcon out /></SetButton>
                <SetButton $w={56} $line="full" aria-label="Increase indent"><IndentIcon /></SetButton>
              </ButtonSet>
            </Row>
          </TwoRows>
        </Group>

        <Group $pad="0 24px 0 26px">
          <TwoRows>
            <Command $gap={8}><WrapIcon />Wrap Text</Command>
            <Command $gap={8} disabled><MergeIcon />Merge &amp; Center <MutedCaret><Caret color="#c0c0c0" /></MutedCaret></Command>
          </TwoRows>
        </Group>

        <Group>
          <TwoRows>
            <ComboBox label="Number format" value="General" width={316} />
            <Row>
              <ButtonSet>
                <SetButton $w={48}><Letter $size={30} $kind="light">$</Letter></SetButton>
                <Drop label="Currency formats" />
                <SetButton $w={58} $line="full"><Letter $size={30} $kind="light">%</Letter></SetButton>
                <SetButton $w={56} $line="full" aria-label="Comma style"><CommaIcon /></SetButton>
              </ButtonSet>
              <ButtonSet>
                <SetButton $w={56} aria-label="Increase decimal"><DecimalIcon more /></SetButton>
                <SetButton $w={56} $line="full" aria-label="Decrease decimal"><DecimalIcon /></SetButton>
              </ButtonSet>
            </Row>
          </TwoRows>
        </Group>

        <Group $pad="0 23px 0 20px" $gap={20}>
          <Big icon={<ConditionalIcon />} label={'Conditional\nFormatting'} />
          <Big icon={<TableStyleIcon />} label={'Format\nas Table'} />
          <Big icon={<CellStyleIcon />} label={'Cell\nStyles'} />
        </Group>

        <Group $pad="0 24px 0 22px" $gap={22}>
          <Big icon={<InsertIcon />} label="Insert" />
          <Big icon={<DeleteIcon />} label="Delete" />
          <Big icon={<FormatIcon />} label="Format" />
        </Group>

        <Group $pad="0 28px">
          <ThreeRows>
            <Command><SigmaIcon />AutoSum<Caret /></Command>
            <Command><FillIcon />Fill<Caret /></Command>
            <Command><EraserIcon />Clear<Caret /></Command>
          </ThreeRows>
        </Group>
      </Ribbon>

      <FormulaBar>
        <NameBox><input aria-label="Name box" defaultValue="A1" /><SpinnerIcon /></NameBox>
        <FormulaTools>
          <button aria-label="Cancel"><CancelIcon /></button>
          <button aria-label="Enter"><AcceptIcon /></button>
          <FxButton>fx</FxButton>
        </FormulaTools>
        <FormulaInput aria-label="Formula" defaultValue="_id" />
      </FormulaBar>
      <SplitLine />

      <SheetArea>
        <Sheet>
          <colgroup>
            <col className="rows" />
            {letters.map((l) => <col key={l} className="data" />)}
            <col />
          </colgroup>
          <thead>
            <tr>
              <Corner><CornerIcon /></Corner>
              {letters.map((l, i) => <ColHead key={l} scope="col" $active={i === 0}>{l}</ColHead>)}
              <ColHead />
            </tr>
          </thead>
          <tbody>
            {rows.map((row, r) => (
              <tr key={r}>
                <RowHead scope="row" $active={r === 0}>{r + 1}</RowHead>
                {row.map((value, c) => (
                  <Cell key={c} $num={r > 0 && !textColumns.has(c)} $selected={r === 0 && c === 0}>
                    {value}
                    {r === 0 && c === 0 && <Selection />}
                  </Cell>
                ))}
                <Cell />
              </tr>
            ))}
          </tbody>
        </Sheet>
      </SheetArea>
    </Screen>
  );
}
